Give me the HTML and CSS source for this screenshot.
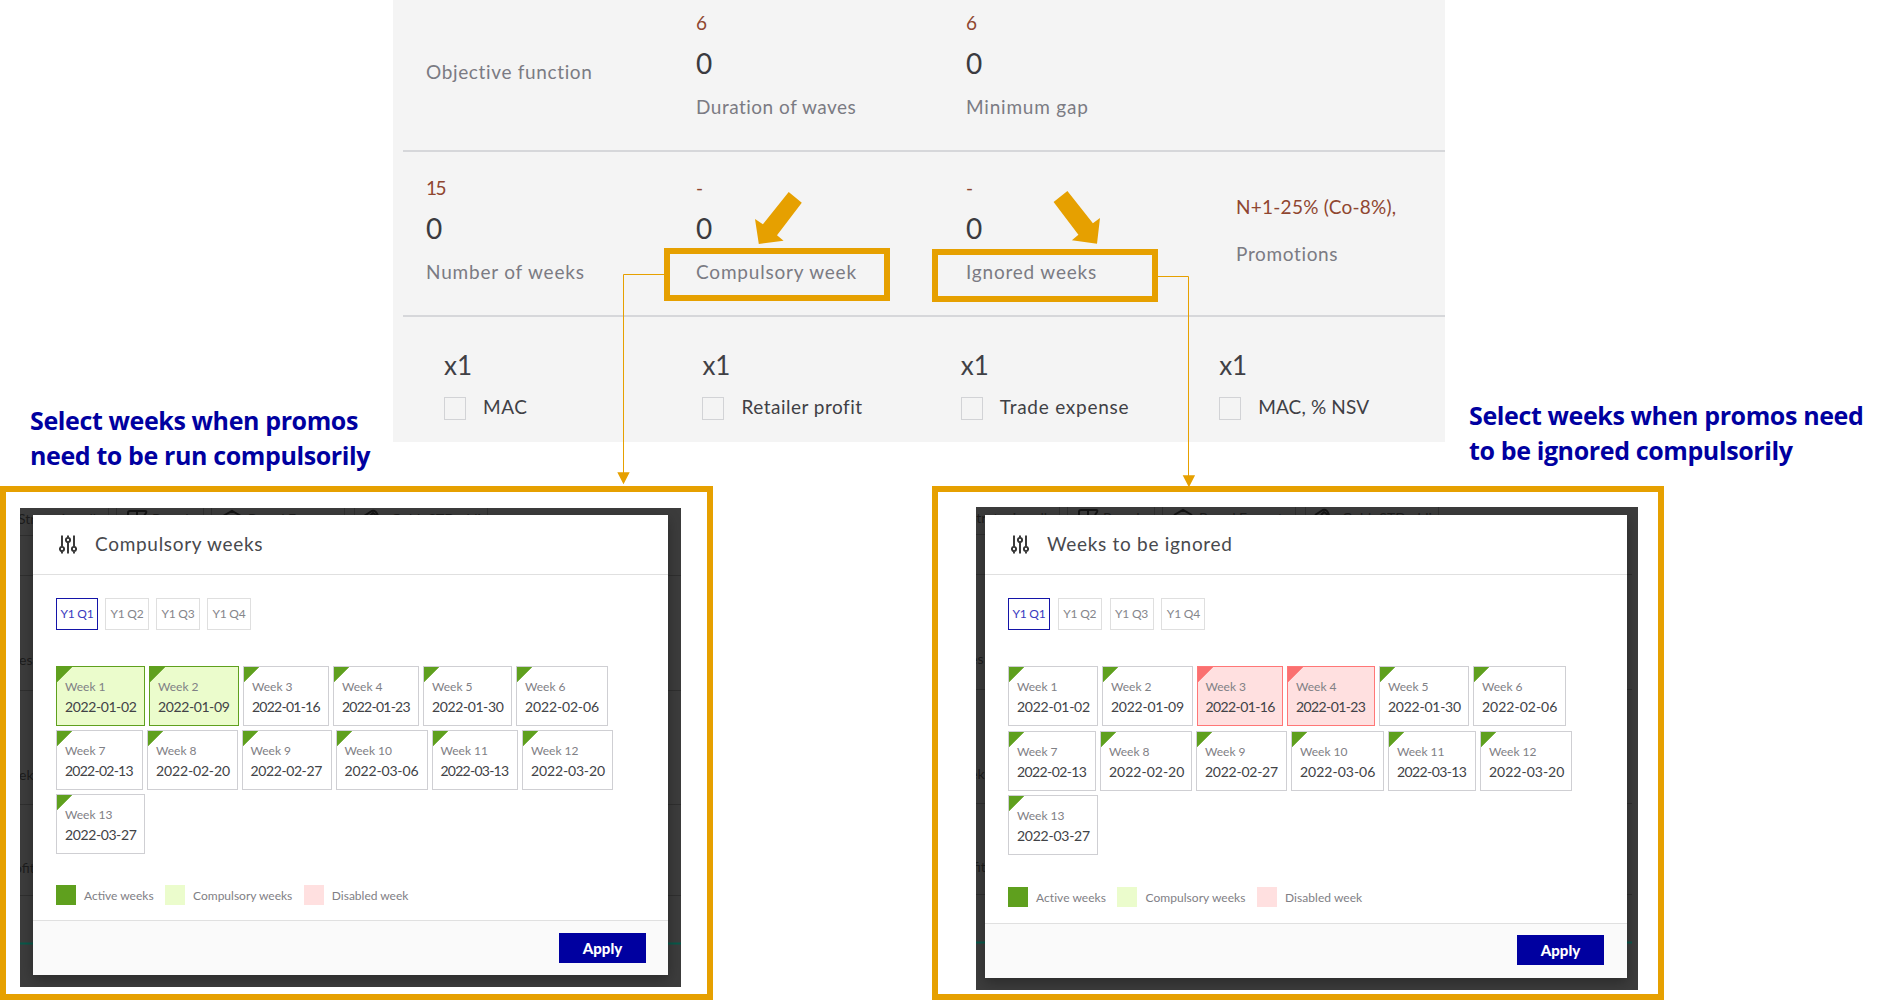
FILE: index.html
```html
<!DOCTYPE html>
<html lang="en">
<head>
<meta charset="utf-8">
<title>Promo weeks</title>
<link rel="stylesheet" href="styles.css">
</head>
<body>
<svg class="symbols" width="0" height="0" aria-hidden="true">
  <symbol id="sliders" viewBox="0 0 18 19">
    <g fill="none" stroke="#333" stroke-width="1.9">
      <path d="M3 .5v11M3 17v1.5M9 .5v2M9 7.5v11M15 .5v11M15 17v1.5"/>
      <circle cx="3" cy="14" r="2.1"/><circle cx="9" cy="5" r="2.1"/><circle cx="15" cy="14" r="2.1"/>
    </g>
  </symbol>
  <symbol id="backdrop" viewBox="0 0 661 480">
    <g fill="none" stroke="#2f2f2f" stroke-width="1">
      <path d="M88.500 0v8M96.500 0v8M183.500 0v8M191.500 0v8M324.500 0v8M334.500 0v8M467.500 0v8"/>
      <path d="M0 27.500h20M0 67.500h661M0 182.500h661M0 296.500h661M0 387.500h661"/>
    </g>
    <path d="M0 435.500h661" stroke="#08594a" stroke-width="2"/>
    <g fill="none" stroke="#141414" stroke-width="2">
      <path d="M108 8V5q0-2 2-2h15q2 0 1 2l-2 3M117 3v5"/>
      <path d="M203 8l9-5 9 5M344 8l8-5q4-1 6 5M350 8l3-3 4 3"/>
    </g>
    <g fill="#1c1c1c" class="backdrop-text">
      <text x="-2" y="16">Strategic cell</text><text x="132" y="16">Brand</text><text x="228" y="16">Brand Format</text><text x="371" y="16">Gobb STD oblig</text>
      <text x="-1" y="157">es</text><text x="-1" y="272">ek</text><text x="-6" y="365">ofit</text>
    </g>
  </symbol>
</svg>

<div class="stage">
  <section class="top">
    <h2 class="caption caption-left">Select weeks when promos<br>need to be run compulsorily</h2>
    <div class="panel">
      <div class="metrics metrics-first">
        <div class="cell objective"><span class="label">Objective function</span></div>
        <div class="cell"><span class="old">6</span><span class="value">0</span><span class="label label-duration">Duration of waves</span></div>
        <div class="cell"><span class="old">6</span><span class="value">0</span><span class="label label-wide">Minimum gap</span></div>
      </div>
      <div class="metrics">
        <div class="cell"><span class="old old-tight">15</span><span class="value">0</span><span class="label label-wide">Number of weeks</span></div>
        <div class="cell"><span class="old">-</span><span class="value">0</span><span class="label label-wide">Compulsory week</span></div>
        <div class="cell"><span class="old">-</span><span class="value">0</span><span class="label label-wide">Ignored weeks</span></div>
        <div class="cell promotions"><span class="old old-promo">N+1-25% (Co-8%),</span><span class="label">Promotions</span></div>
      </div>
      <div class="checks">
        <div class="check"><span class="factor">x1</span><span class="line"><i class="box"></i>MAC</span></div>
        <div class="check"><span class="factor">x1</span><span class="line"><i class="box"></i>Retailer profit</span></div>
        <div class="check"><span class="factor">x1</span><span class="line line-wide"><i class="box"></i>Trade expense</span></div>
        <div class="check"><span class="factor">x1</span><span class="line line-tight"><i class="box"></i>MAC, % NSV</span></div>
      </div>
    </div>
    <h2 class="caption caption-right">Select weeks when promos need<br>to be ignored compulsorily</h2>
  </section>

  <section class="frames">
    <div class="frame frame-left">
      <div class="screen">
        <svg class="backdrop" width="661" height="480"><use href="#backdrop" width="661" height="480"/></svg>
        <div class="dialog">
          <header class="head"><svg class="icon" width="18" height="19"><use href="#sliders"/></svg><span class="title">Compulsory weeks</span></header>
          <div class="content">
            <div class="tabs"><span class="tab active">Y1 Q1</span><span class="tab">Y1 Q2</span><span class="tab">Y1 Q3</span><span class="tab">Y1 Q4</span></div>
            <div class="weeks">
              <div class="row row-1">
                <div class="week chosen"><small>Week 1</small><b>2022-01-02</b></div>
                <div class="week chosen"><small>Week 2</small><b>2022-01-09</b></div>
                <div class="week"><small>Week 3</small><b class="narrow">2022-01-16</b></div>
                <div class="week"><small>Week 4</small><b class="narrow">2022-01-23</b></div>
                <div class="week"><small>Week 5</small><b>2022-01-30</b></div>
                <div class="week"><small>Week 6</small><b class="wide">2022-02-06</b></div>
              </div>
              <div class="row row-2">
                <div class="week"><small>Week 7</small><b class="narrow">2022-02-13</b></div>
                <div class="week"><small>Week 8</small><b class="wide">2022-02-20</b></div>
                <div class="week"><small>Week 9</small><b>2022-02-27</b></div>
                <div class="week"><small>Week 10</small><b class="wide">2022-03-06</b></div>
                <div class="week"><small>Week 11</small><b class="narrow">2022-03-13</b></div>
                <div class="week"><small>Week 12</small><b class="wide">2022-03-20</b></div>
              </div>
              <div class="row row-1">
                <div class="week"><small>Week 13</small><b>2022-03-27</b></div>
              </div>
            </div>
            <div class="legend">
              <i class="swatch active-swatch"></i><span>Active weeks</span>
              <i class="swatch compulsory-swatch"></i><span>Compulsory weeks</span>
              <i class="swatch disabled-swatch"></i><span>Disabled week</span>
            </div>
          </div>
          <footer class="foot"><button class="apply">Apply</button></footer>
        </div>
      </div>
    </div>

    <div class="frame frame-right">
      <div class="screen">
        <svg class="backdrop" width="667" height="480"><use href="#backdrop" width="661" height="480"/></svg>
        <div class="dialog">
          <header class="head"><svg class="icon" width="18" height="19"><use href="#sliders"/></svg><span class="title">Weeks to be ignored</span></header>
          <div class="content">
            <div class="tabs"><span class="tab active">Y1 Q1</span><span class="tab">Y1 Q2</span><span class="tab">Y1 Q3</span><span class="tab">Y1 Q4</span></div>
            <div class="weeks">
              <div class="row row-1">
                <div class="week"><small>Week 1</small><b>2022-01-02</b></div>
                <div class="week"><small>Week 2</small><b>2022-01-09</b></div>
                <div class="week disabled"><small>Week 3</small><b class="narrow">2022-01-16</b></div>
                <div class="week disabled"><small>Week 4</small><b class="narrow">2022-01-23</b></div>
                <div class="week"><small>Week 5</small><b>2022-01-30</b></div>
                <div class="week"><small>Week 6</small><b class="wide">2022-02-06</b></div>
              </div>
              <div class="row row-2">
                <div class="week"><small>Week 7</small><b class="narrow">2022-02-13</b></div>
                <div class="week"><small>Week 8</small><b class="wide">2022-02-20</b></div>
                <div class="week"><small>Week 9</small><b>2022-02-27</b></div>
                <div class="week"><small>Week 10</small><b class="wide">2022-03-06</b></div>
                <div class="week"><small>Week 11</small><b class="narrow">2022-03-13</b></div>
                <div class="week"><small>Week 12</small><b class="wide">2022-03-20</b></div>
              </div>
              <div class="row row-1">
                <div class="week"><small>Week 13</small><b>2022-03-27</b></div>
              </div>
            </div>
            <div class="legend">
              <i class="swatch active-swatch"></i><span>Active weeks</span>
              <i class="swatch compulsory-swatch"></i><span>Compulsory weeks</span>
              <i class="swatch disabled-swatch"></i><span>Disabled week</span>
            </div>
          </div>
          <footer class="foot"><button class="apply">Apply</button></footer>
        </div>
      </div>
    </div>
  </section>

  <!-- callout boxes, arrows and connectors over the page -->
  <svg class="annotations" width="1902" height="1000" viewBox="0 0 1902 1000">
    <g fill="none" stroke="#e6a000">
      <rect x="667" y="251" width="220" height="47" stroke-width="6"/>
      <rect x="935" y="252" width="220" height="47" stroke-width="6"/>
      <path d="M664 274.500H623.500V473M1158 276.500H1188.500V476" stroke-width="1"/>
    </g>
    <g fill="#e6a000">
      <path d="M788.700 192 801.800 202.700 777 235.300 783.600 240.700 758.800 244 755 219 762.900 224.300z"/>
      <path d="M1067.400 191 1053.600 202 1078.400 234.700 1071.900 240.300 1097 243.700 1100 218 1092.900 223.300z"/>
      <path d="M617.300 472.300h12.400l-6.200 12zM1182.700 475.300h12.400l-6.200 12z"/>
    </g>
  </svg>
</div>
</body>
</html>
```
FILE: styles.css
```css
* { box-sizing: border-box; }
body {
  margin: 0;
  background: #fff;
  font-family: Lato, "Open Sans", sans-serif;
  color: #3f4045;
}
.symbols { position: absolute; }
.stage { position: relative; width: 1902px; height: 1000px; overflow: hidden; }
.annotations { position: absolute; left: 0; top: 0; }

/* settings panel */
.top { display: grid; grid-template-columns: 393px 1052px 1fr; height: 486px; align-items: start; }
.panel { height: 442px; background: #f4f4f4; padding-left: 10px; font-size: 19px; }
.metrics {
  display: grid;
  grid-template-columns: repeat(4, 270px);
  height: 165px;
  padding: 21px 0 0 23px;
  border-bottom: 2px solid #d6d7da;
  width: 1042px;
}
.metrics-first { height: 152px; padding-top: 8px; }
.cell { display: flex; flex-direction: column; white-space: nowrap; }
.old, .label { line-height: 30px; letter-spacing: .65px; }
.old { color: #8f4630; }
.old-tight { letter-spacing: -1.500px; }
.old-promo { letter-spacing: .25px; }
.label { color: #7b7b83; }
.label-duration { letter-spacing: .5px; }
.label-wide { letter-spacing: .8px; }
.value { font-size: 28px; line-height: 40px; margin: 5px 0 9px; color: #3a3b40; }
.objective { padding-top: 49px; }
.promotions { padding-top: 19px; gap: 17px; }
.checks { display: flex; padding: 33px 0 0 41px; }
.check { flex: none; width: 258.400px; display: flex; flex-direction: column; white-space: nowrap; }
.factor { font-size: 26px; line-height: 30px; }
.line { display: flex; line-height: 23px; margin-top: 15px; letter-spacing: .5px; }
.line-wide { letter-spacing: .75px; }
.line-tight { letter-spacing: .15px; }
.box { width: 22px; height: 23px; margin: 2px 17px 0 0; border: 1px solid #d2d3d6; }

.caption {
  margin: 0;
  font: 700 25px/35px "Open Sans", sans-serif;
  letter-spacing: -.38px;
  color: #0000a0;
  white-space: nowrap;
}
.caption-left { padding: 403px 0 0 30px; }
.caption-right { padding: 398px 0 0 24px; }

/* framed dialogs */
.frames { display: flex; gap: 219px; }
.frame { height: 514px; border: 6px solid #e6a000; }
.frame-left { width: 713px; padding: 16px 0 0 14px; }
.frame-right { width: 732px; padding: 15px 0 0 38px; }
.screen { position: relative; background: #3c3c3c; overflow: hidden; width: 661px; height: 479px; padding: 7px 0 0 13px; }
.frame-right .screen { width: 662px; height: 483px; padding: 8px 0 0 9px; }
.backdrop { position: absolute; left: 0; top: 0; }
.frame-right .backdrop { left: -5px; }
.backdrop-text { font-size: 14px; }
.dialog {
  position: relative;
  display: flex;
  flex-direction: column;
  width: 635px;
  height: 460px;
  background: #fff;
  box-shadow: 0 4px 12px rgba(0, 0, 0, .3);
}
.frame-right .dialog { width: 642px; height: 463px; }
.head { display: flex; height: 60px; padding-left: 26px; border-bottom: 1px solid #e0e0e0; }
.icon { margin-top: 20px; }
.title { margin: 14px 0 0 18px; font-size: 19px; line-height: 30px; letter-spacing: .7px; color: #48494d; }
.content { flex: 1; padding: 23px 0 0 23px; }
.tabs { display: flex; gap: 7px; }
.frame-right .tabs { gap: 7.800px; }
.tab {
  width: 44px;
  height: 32px;
  border: 1px solid #dfdfdf;
  text-align: center;
  font-size: 12px;
  line-height: 30px;
  letter-spacing: -.2px;
  color: #85868b;
}
.tab.active { width: 42px; border-color: #1414a8; color: #3a3ac0; }
.weeks { display: flex; flex-direction: column; gap: 4px; margin-top: 36px; }
.row { display: grid; column-gap: 4px; height: 60px; }
.row-1 { grid-template-columns: 89px 90px 86px 86px 89px 91.500px; }
.row-2 { grid-template-columns: 87px 90.500px 90px 92px 86.500px 90.500px; }
.frame-right .weeks { gap: 4.500px; }
.frame-right .row-1 { grid-template-columns: 90px 90.500px 86.500px 88px 90px 92.500px; }
.frame-right .row-2 { grid-template-columns: 88px 92px 91px 93px 88px 91.500px; }
.week {
  display: flex;
  flex-direction: column;
  padding: 11px 0 0 8px;
  border: 1px solid #cfcfd3;
  background: linear-gradient(135deg, #5fa01e 10.500px, transparent 11px);
  white-space: nowrap;
}
.week small { font-size: 12px; line-height: 18px; color: #7f8085; }
.week b { font-size: 14px; line-height: 21px; font-weight: 400; letter-spacing: -.4px; color: #414246; }
.week b.narrow { letter-spacing: -.75px; }
.week b.wide { letter-spacing: -.15px; }
.frame-right .week b { line-height: 22px; letter-spacing: -.25px; }
.frame-right .week b.narrow { letter-spacing: -.6px; }
.frame-right .week b.wide { letter-spacing: 0; }
.week.chosen { border-color: #5fa01e; background-color: #ebfccc; }
.week.disabled { border-color: #f77; background: linear-gradient(135deg, #fa7070 10.500px, #ffe0e0 11px); }
.legend { display: flex; align-items: center; margin-top: 31px; font-size: 12px; color: #7f8085; white-space: nowrap; }
.swatch { width: 20px; height: 20px; margin-right: 8px; }
.legend span { margin-right: 11.500px; letter-spacing: 0; }
.frame-right .legend { margin-top: 32px; }
.frame-right .legend span { letter-spacing: .05px; }
.active-swatch { background: #5fa01e; }
.compulsory-swatch { background: #ebfccc; }
.disabled-swatch { background: #ffe0e0; }
.foot { height: 55px; border-top: 1px solid #e0e0e0; background: #fafafa; padding: 12px 22px 0 0; text-align: right; }
.frame-right .foot { padding: 11px 23px 0 0; }
.apply {
  width: 87px;
  height: 30px;
  border: 0;
  padding: 0;
  background: #0000a0;
  color: #fff;
  font: 900 15px/30px Lato, sans-serif;
}
```
